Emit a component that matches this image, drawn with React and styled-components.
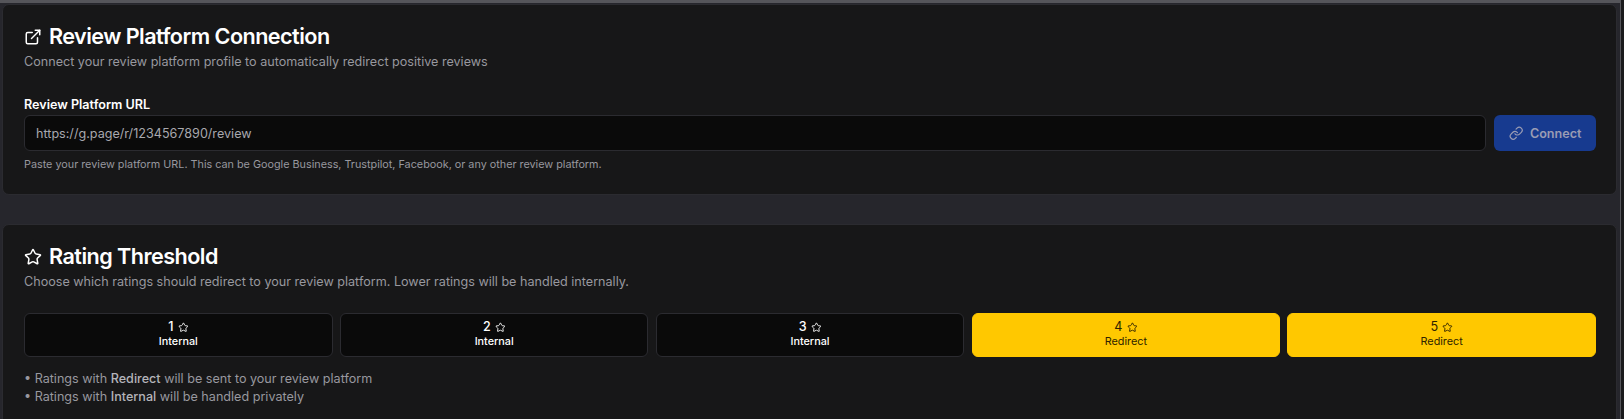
import React from "react"
import styled, { createGlobalStyle } from "styled-components"
import { ExternalLink, Link, Star } from "lucide-react"

const GlobalStyle = createGlobalStyle`
  html, body {
    margin: 0;
    height: 100%;
    background-color: #1a1a1c;
    overflow: hidden;
  }

  body {
    font-family: Inter, "Liberation Sans", sans-serif;
  }
`

const Page = styled.div`
  height: 419px;
  margin-right: 3px;
  box-sizing: border-box;
  padding: 1px 3px 0 2px;
  background-color: #26262c;
  border-top: 3px solid #55555a;
  border-right: 1px solid #55555a;
  display: flex;
  flex-direction: column;
  gap: 29px;
  overflow: hidden;
`

const Card = styled.section`
  flex: ${(p) => (p.$open ? "1 0 auto" : "0 0 auto")};
  box-sizing: border-box;
  background-color: #171718;
  border: 1px solid #2b2b30;
  border-radius: 7px;
  padding: 17px 20px 22px 21px;
`

const Title = styled.h2`
  margin: 0 0 2px;
  display: flex;
  align-items: center;
  gap: 7px;
  color: #fff;
  font-size: 21.6px;
  line-height: 29px;
  font-weight: 600;
  letter-spacing: -0.54px;
`

const Subtitle = styled.p`
  margin: 0 0 ${(p) => (p.$tight ? "22px" : "27px")};
  color: #98989f;
  font-size: 12.6px;
  line-height: 18px;
`

const Label = styled.label`
  display: block;
  color: #fff;
  font-size: 12.6px;
  line-height: 13px;
  font-weight: 600;
  margin-bottom: 4px;
`

const Row = styled.div`
  display: flex;
  gap: 8px;
`

const Input = styled.input`
  flex: 1;
  height: 36px;
  box-sizing: border-box;
  background-color: #0a0a0a;
  border: 1px solid #2b2b30;
  border-radius: 6px;
  padding: 0 11px;
  color: #a8a8ae;
  font-family: inherit;
  font-size: 12.6px;
  outline: none;
`

const ConnectButton = styled.button`
  width: 102px;
  height: 36px;
  display: flex;
  align-items: center;
  justify-content: center;
  gap: 7px;
  background-color: #173a8f;
  color: #9a9cb4;
  border: 0;
  border-radius: 6px;
  font-family: inherit;
  font-size: 12.6px;
  font-weight: 600;
`

const Hint = styled.p`
  margin: 7px 0 0;
  color: #98989f;
  font-size: 10.8px;
  line-height: 14px;
`

const Ratings = styled.div`
  display: grid;
  grid-template-columns: repeat(5, 1fr);
  gap: 7.2px;
`

const RatingButton = styled.button`
  height: 44px;
  display: flex;
  flex-direction: column;
  align-items: center;
  justify-content: center;
  box-sizing: border-box;
  border-radius: 6px;
  border: 1px solid ${(p) => (p.$redirect ? "#ffc800" : "#2b2b30")};
  background-color: ${(p) => (p.$redirect ? "#ffc800" : "#0a0a0a")};
  color: ${(p) => (p.$redirect ? "#2e2300" : "#fff")};
  font-family: inherit;
  padding: 0 0 2px;
`

const RatingValue = styled.span`
  display: flex;
  align-items: center;
  gap: 4px;
  font-size: 12.6px;
  line-height: 16px;
  font-weight: ${(p) => (p.$redirect ? 400 : 500)};
`

const RatingAction = styled.span`
  font-size: 10.8px;
  line-height: 14px;
  font-weight: ${(p) => (p.$redirect ? 400 : 500)};
`

const Notes = styled.ul`
  list-style: none;
  margin: 13px 0 0;
  padding: 0;
  color: #98989f;
  font-size: 12.6px;
  line-height: 18px;
`

const Strong = styled.strong`
  color: #b4b4ba;
  font-weight: 500;
`

const ratings = [1, 2, 3, 4, 5]

const App = () => (
  <Page>
    <GlobalStyle />

    <Card>
      <Title>
        <ExternalLink size={18} />
        Review Platform Connection
      </Title>
      <Subtitle>
        Connect your review platform profile to automatically redirect positive
        reviews
      </Subtitle>

      <Label htmlFor="platform-url">Review Platform URL</Label>
      <Row>
        <Input
          id="platform-url"
          readOnly
          value="https://g.page/r/1234567890/review"
        />
        <ConnectButton>
          <Link size={14.4} />
          Connect
        </ConnectButton>
      </Row>
      <Hint>
        Paste your review platform URL. This can be Google Business, Trustpilot,
        Facebook, or any other review platform.
      </Hint>
    </Card>

    <Card $open>
      <Title>
        <Star size={18} />
        Rating Threshold
      </Title>
      <Subtitle $tight>
        Choose which ratings should redirect to your review platform. Lower
        ratings will be handled internally.
      </Subtitle>

      <Ratings>
        {ratings.map((rating) => {
          const redirect = rating > 3
          return (
            <RatingButton key={rating} $redirect={redirect}>
              <RatingValue $redirect={redirect}>
                {rating} <Star size={10.8} />
              </RatingValue>
              <RatingAction $redirect={redirect}>
                {redirect ? "Redirect" : "Internal"}
              </RatingAction>
            </RatingButton>
          )
        })}
      </Ratings>

      <Notes>
        <li>
          • Ratings with <Strong>Redirect</Strong> will be sent to your review
          platform
        </li>
        <li>
          • Ratings with <Strong>Internal</Strong> will be handled privately
        </li>
      </Notes>
    </Card>
  </Page>
)

export default App
